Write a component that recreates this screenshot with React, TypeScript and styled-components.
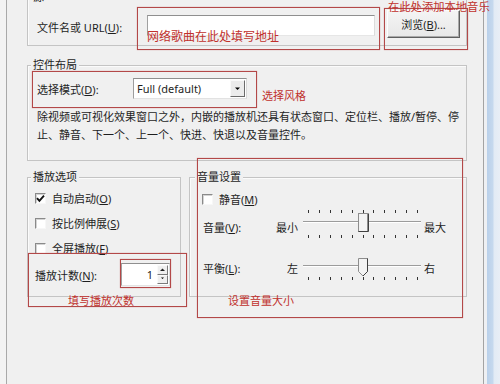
import React from "react";
import styled, { createGlobalStyle } from "styled-components";

const Global = createGlobalStyle`
  html, body { margin: 0; padding: 0; background: #f0f0f0; }
  body { font-family: "Noto Sans", "Noto Sans CJK SC", sans-serif; }
`;

const Root = styled.div`
  position: relative;
  width: 500px;
  height: 384px;
  overflow: hidden;
  background: #f0f0f0;
  display: flex;
  font-family: "Noto Sans", "Noto Sans CJK SC", sans-serif;
  font-size: 11px;
  color: #1e1e1e;
`;

const LeftEdge = styled.div`
  width: 6px;
  flex: none;
  background: #f3f3f3;
`;

const Panel = styled.div`
  width: 478px;
  flex: none;
  box-sizing: border-box;
  border-left: 1px solid #a9a9a9;
  border-right: 1px solid #a3a3a3;
  padding: 0 16px 0 20px;
  display: flex;
  flex-direction: column;
`;

const RightFrame = styled.div`
  flex: 1;
  background: linear-gradient(
    to right,
    #eef0f3 0,
    #eef0f3 3px,
    #b9d0ea 3px,
    #c6d9ee 9px,
    #e2ebf5 10px,
    #e8eef6 100%
  );
`;

const Group = styled.div<{ $w?: number }>`
  box-sizing: border-box;
  border: 1px solid #c4c4c4;
  box-shadow: inset 1px 1px 0 #fbfbfb;
  display: flex;
  flex-direction: column;
  ${(p) => (p.$w ? `width: ${p.$w}px; flex: none;` : "")}
`;

const GroupTitle = styled.div<{ $inset: number }>`
  align-self: flex-start;
  height: 14px;
  line-height: 14px;
  margin: -8px 0 0 ${(p) => p.$inset}px;
  padding: 0 2px;
  background: #f0f0f0;
  white-space: nowrap;
`;

const SourceGroup = styled(Group)`
  margin-top: -3px;
  padding-bottom: 7px;
`;

const LayoutGroup = styled(Group)`
  margin-top: 19px;
  padding-bottom: 16px;
`;

const BottomRow = styled.div`
  display: flex;
  gap: 8px;
  margin-top: 16px;
  align-items: stretch;
`;

const UrlRow = styled.div`
  display: flex;
  align-items: center;
  height: 28px;
  margin-top: 6px;
  padding-left: 9px;
`;

const FieldLabel = styled.span<{ $w: number; $dy?: number }>`
  width: ${(p) => p.$w}px;
  flex: none;
  white-space: nowrap;
  margin-top: ${(p) => p.$dy ?? 0}px;
`;

const Key = styled.span`
  text-decoration: underline;
  text-underline-offset: 1px;
`;

const TextBox = styled.input`
  box-sizing: border-box;
  width: 228px;
  height: 21px;
  margin: 2px 0 0 0;
  padding: 0 3px;
  background: #fff;
  border: 1px solid;
  border-color: #8f8f8f #dcdcdc #e6e6e6 #a0a0a0;
  outline: none;
  font: inherit;
`;

const PushButton = styled.button`
  box-sizing: border-box;
  width: 73px;
  height: 28px;
  margin-left: 12px;
  padding: 0;
  background: linear-gradient(#f4f4f4, #e7e7e7);
  border: 1px solid;
  border-color: #fdfdfd #5f5f5f #5f5f5f #fdfdfd;
  box-shadow: inset -1px -1px 0 #a9a9a9;
  font: inherit;
  color: #1e1e1e;
`;

const ModeRow = styled.div`
  display: flex;
  align-items: center;
  height: 21px;
  margin-top: 6px;
  padding-left: 9px;
`;

const Combo = styled.div`
  box-sizing: border-box;
  width: 114px;
  height: 21px;
  display: flex;
  align-items: center;
  background: #fff;
  border: 1px solid;
  border-color: #8f8f8f #d8d8d8 #e2e2e2 #9d9d9d;
  padding: 1px;
`;

const ComboText = styled.span`
  flex: 1;
  padding-left: 2px;
  white-space: nowrap;
`;

const ComboButton = styled.div`
  box-sizing: border-box;
  width: 15px;
  height: 17px;
  display: flex;
  align-items: center;
  justify-content: center;
  background: #ececec;
  border: 1px solid;
  border-color: #fafafa #6b6b6b #6b6b6b #fafafa;
`;

const Desc = styled.div`
  margin-top: 9px;
  padding-left: 9px;
  line-height: 18px;
  white-space: nowrap;
`;

const OptionList = styled.div`
  display: flex;
  flex-direction: column;
  gap: 5px;
  margin-top: 4px;
  padding-left: 7px;
`;

const CheckRow = styled.div<{ $h?: number }>`
  display: flex;
  align-items: center;
  gap: 6px;
  height: ${(p) => p.$h ?? 20}px;
  white-space: nowrap;
`;

const Box = styled.span`
  box-sizing: border-box;
  width: 11px;
  height: 11px;
  flex: none;
  background: #fff;
  border: 1px solid;
  border-color: #8a8a8a #f7f7f7 #f7f7f7 #8a8a8a;
  box-shadow: inset 1px 1px 0 #d4d4d4;
  display: flex;
  align-items: center;
  justify-content: center;
`;

const CountRow = styled.div`
  display: flex;
  align-items: center;
  height: 23px;
`;

const Spin = styled.div`
  box-sizing: border-box;
  width: 49px;
  height: 23px;
  display: flex;
  background: #fff;
  border: 1px solid;
  border-color: #8f8f8f #dcdcdc #e4e4e4 #a0a0a0;
  padding: 1px;
`;

const SpinValue = styled.span`
  flex: 1;
  text-align: right;
  padding-right: 4px;
  line-height: 19px;
`;

const SpinButtons = styled.div`
  width: 11px;
  display: flex;
  flex-direction: column;
`;

const SpinHalf = styled.div`
  flex: 1;
  display: flex;
  align-items: center;
  justify-content: center;
  background: #efefef;
  border: 1px solid;
  border-color: #fafafa #7a7a7a #7a7a7a #fafafa;
`;

const MuteRow = styled(CheckRow)`
  margin-top: 7px;
  padding-left: 12px;
`;

const SliderRow = styled.div<{ $top: number; $gap?: number }>`
  display: grid;
  grid-template-columns: 70px 25px 120px max-content;
  align-items: start;
  padding-left: 13px;
  margin-top: ${(p) => p.$gap ?? 0}px;
  & > span {
    padding-top: ${(p) => p.$top}px;
    line-height: 14px;
    white-space: nowrap;
  }
`;

const MinText = styled.span`
  text-align: right;
`;

const MaxText = styled.span`
  margin-left: 6px;
`;

const SliderSvg = styled.svg`
  margin-left: 4px;
  display: block;
`;

const VolumeGroup = styled(Group)`
  padding-bottom: 13px;
`;

const RedBox = styled.div<{ $x: number; $y: number; $w: number; $h: number }>`
  position: absolute;
  left: ${(p) => p.$x}px;
  top: ${(p) => p.$y}px;
  width: ${(p) => p.$w}px;
  height: ${(p) => p.$h}px;
  box-sizing: border-box;
  border: 1px solid #b34848;
  box-shadow: 0 0 1px rgba(190, 80, 80, 0.6);
  pointer-events: none;
`;

const RedNote = styled.span<{ $x: number; $y: number; $size?: number }>`
  position: absolute;
  left: ${(p) => p.$x}px;
  top: ${(p) => p.$y}px;
  color: #c0302c;
  font-size: ${(p) => p.$size ?? 11}px;
  line-height: 14px;
  white-space: nowrap;
  pointer-events: none;
`;

const Down = ({ w = 5 }: { w?: number }) => (
  <svg width={w + 2} height={4} viewBox={`0 0 ${w + 2} 4`}>
    <path d={`M1 0.5 H${w + 1} L${(w + 2) / 2} ${w / 2 + 0.5} Z`} fill="#000" />
  </svg>
);

const Up = () => (
  <svg width={5} height={3} viewBox="0 0 5 3">
    <path d="M0 3 H5 L2.5 0.5 Z" fill="#222" />
  </svg>
);

const Tick = () => (
  <svg width={9} height={9} viewBox="0 0 9 9">
    <path d="M1 4.2 L3.4 6.8 L8 1.6" fill="none" stroke="#111" strokeWidth={1.9} />
  </svg>
);

const tickXs = Array.from({ length: 11 }, (_, i) => 6 + i * 10.9);

const Slider = ({ both }: { both: boolean }) => {
  const trackY = both ? 15 : 11;
  const h = both ? 34 : 28;
  return (
    <SliderSvg width={120} height={h} viewBox={`0 0 120 ${h}`}>
      <rect x={1} y={trackY - 1} width={118} height={1} fill="#9c9c9c" />
      <rect x={1} y={trackY} width={118} height={1} fill="#ffffff" />
      {both &&
        tickXs.map((x, i) => (
          <rect key={"t" + i} x={Math.round(x)} y={3} width={1} height={3} fill="#333" />
        ))}
      {tickXs.map((x, i) => (
        <rect
          key={"b" + i}
          x={Math.round(x)}
          y={both ? 28 : 22}
          width={1}
          height={3}
          fill="#333"
        />
      ))}
      {both ? (
        <g>
          <rect x={56.5} y={6.5} width={9} height={18} fill="#f3f3f3" stroke="#8d8d8d" />
          <path d="M66.5 6.5 V24.5 H56.5" fill="none" stroke="#404040" />
        </g>
      ) : (
        <g>
          <path d="M56.5 3.5 H65.5 V16.5 L61 21 L56.5 16.5 Z" fill="#f3f3f3" stroke="#8d8d8d" />
          <path d="M65.5 3.5 V16.5 L61 21" fill="none" stroke="#404040" />
        </g>
      )}
    </SliderSvg>
  );
};

export default function App() {
  return (
    <Root>
      <Global />
      <LeftEdge />
      <Panel>
        <SourceGroup>
          <GroupTitle $inset={3}>源</GroupTitle>
          <UrlRow>
            <FieldLabel $w={110} $dy={6}>
              文件名或 URL(<Key>U</Key>):
            </FieldLabel>
            <TextBox readOnly value="" />
            <PushButton type="button">
              浏览(<Key>B</Key>)...
            </PushButton>
          </UrlRow>
        </SourceGroup>

        <LayoutGroup>
          <GroupTitle $inset={3}>控件布局</GroupTitle>
          <ModeRow>
            <FieldLabel $w={96}>
              选择模式(<Key>D</Key>):
            </FieldLabel>
            <Combo>
              <ComboText>Full (default)</ComboText>
              <ComboButton>
                <Down />
              </ComboButton>
            </Combo>
          </ModeRow>
          <Desc>
            除视频或可视化效果窗口之外，内嵌的播放机还具有状态窗口、定位栏、播放/暂停、停
            <br />
            止、静音、下一个、上一个、快进、快退以及音量控件。
          </Desc>
        </LayoutGroup>

        <BottomRow>
          <Group $w={154}>
            <GroupTitle $inset={3}>播放选项</GroupTitle>
            <OptionList>
              <CheckRow>
                <Box>
                  <Tick />
                </Box>
                <span>
                  自动启动(<Key>O</Key>)
                </span>
              </CheckRow>
              <CheckRow>
                <Box />
                <span>
                  按比例伸展(<Key>S</Key>)
                </span>
              </CheckRow>
              <CheckRow>
                <Box />
                <span>
                  全屏播放(<Key>F</Key>)
                </span>
              </CheckRow>
              <CountRow>
                <FieldLabel $w={86}>
                  播放计数(<Key>N</Key>):
                </FieldLabel>
                <Spin>
                  <SpinValue>1</SpinValue>
                  <SpinButtons>
                    <SpinHalf>
                      <Up />
                    </SpinHalf>
                    <SpinHalf>
                      <Down w={3} />
                    </SpinHalf>
                  </SpinButtons>
                </Spin>
              </CountRow>
            </OptionList>
          </Group>

          <VolumeGroup $w={278}>
            <GroupTitle $inset={5}>音量设置</GroupTitle>
            <MuteRow $h={16}>
              <Box />
              <span>
                静音(<Key>M</Key>)
              </span>
            </MuteRow>
            <SliderRow $top={14}>
              <span>
                音量(<Key>V</Key>):
              </span>
              <MinText>最小</MinText>
              <Slider both />
              <MaxText>最大</MaxText>
            </SliderRow>
            <SliderRow $top={7} $gap={14}>
              <span>
                平衡(<Key>L</Key>):
              </span>
              <MinText>左</MinText>
              <Slider both={false} />
              <MaxText>右</MaxText>
            </SliderRow>
          </VolumeGroup>
        </BottomRow>
      </Panel>
      <RightFrame />

      <RedBox $x={137} $y={7} $w={243} $h={43} />
      <RedNote $x={147} $y={30} $size={12}>网络歌曲在此处填写地址</RedNote>
      <RedBox $x={384} $y={8} $w={84} $h={42} />
      <RedNote $x={388} $y={0} $size={11.3}>在此处添加本地音乐</RedNote>
      <RedBox $x={32} $y={71} $w={225} $h={37} />
      <RedNote $x={262} $y={89}>选择风格</RedNote>
      <RedBox $x={28} $y={253} $w={159} $h={54} />
      <RedBox $x={120} $y={259} $w={51} $h={29} />
      <RedNote $x={68} $y={294}>填写播放次数</RedNote>
      <RedBox $x={197} $y={158} $w={266} $h={160} />
      <RedNote $x={228} $y={294}>设置音量大小</RedNote>
    </Root>
  );
}
